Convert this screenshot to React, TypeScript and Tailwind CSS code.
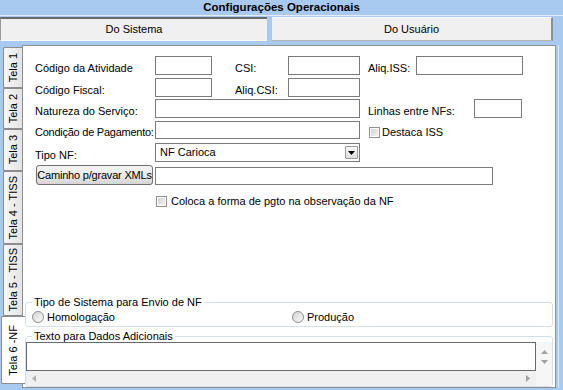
import type { ReactNode } from 'react';

const tabs = [
  { label: 'Tela 1', size: 'h-[41px]' },
  { label: 'Tela 2', size: 'h-[41px]' },
  { label: 'Tela 3', size: 'h-[42px]' },
  { label: 'Tela 4 - TISS', size: 'h-[73px]' },
  { label: 'Tela 5 - TISS', size: 'h-[72px]' },
];

function Label({ children, className = '' }: { children: ReactNode; className?: string }) {
  return <div className={`shrink-0 self-end leading-[13px] whitespace-nowrap ${className}`}>{children}</div>;
}

function Box({ className = '' }: { className?: string }) {
  return <div className={`shrink-0 bg-white border border-[#7b7b7b] ${className}`} />;
}

function CheckBox() {
  return (
    <div className="w-[11px] h-[11px] shrink-0 border border-[#8e8f8f] bg-white p-[1px]">
      <div className="w-full h-full bg-gradient-to-br from-[#d2d2d2] to-[#f4f4f4]" />
    </div>
  );
}

function Radio() {
  return (
    <div className="w-[12px] h-[12px] shrink-0 rounded-full border border-[#8e8f8f] bg-gradient-to-br from-[#d4d4d4] to-[#fafafa]" />
  );
}

function VerticalTabs() {
  return (
    <div className="w-[22px] shrink-0 flex flex-col pt-[2px]">
      {tabs.map((t) => (
        <div
          key={t.label}
          className={`${t.size} ml-[3px] w-[19px] flex items-center justify-center bg-gradient-to-r from-[#f7f7f7] to-[#e4e4e4] border border-r-0 border-[#8c8c8c] rounded-l-[2px]`}
        >
          <span className="[writing-mode:vertical-rl] rotate-180 whitespace-nowrap leading-none">{t.label}</span>
        </div>
      ))}
      <div className="h-[68px] ml-[1px] w-[24px] -mr-[3px] relative z-10 flex items-center justify-center bg-white border border-r-0 border-[#8c8c8c] rounded-l-[2px]">
        <span className="[writing-mode:vertical-rl] rotate-180 whitespace-nowrap leading-none">Tela 6 -NF</span>
      </div>
    </div>
  );
}

function Panel() {
  return (
    <div className="w-[534px] h-[343px] shrink-0 bg-white border border-[#8e8f8f] flex flex-col">
      <div className="pl-[12px] flex flex-col">
        <div className="flex h-[19px] mt-[10px]">
          <Label className="w-[120px]">Código da Atividade</Label>
          <Box className="w-[57px]" />
          <Label className="w-[53px] ml-[23px]">CSI:</Label>
          <Box className="w-[72px]" />
          <Label className="w-[48px] ml-[8px]">Aliq.ISS:</Label>
          <Box className="w-[107px]" />
        </div>
        <div className="flex h-[19px] mt-[3px]">
          <Label className="w-[120px]">Código Fiscal:</Label>
          <Box className="w-[57px]" />
          <Label className="w-[53px] ml-[23px]">Aliq.CSI:</Label>
          <Box className="w-[72px]" />
        </div>
        <div className="flex h-[19px] mt-[2px]">
          <Label className="w-[120px]">Natureza do Serviço:</Label>
          <Box className="w-[205px]" />
          <Label className="w-[106px] ml-[8px]">Linhas entre NFs:</Label>
          <Box className="w-[48px]" />
        </div>
        <div className="flex h-[18px] mt-[3px]">
          <Label className="w-[120px] tracking-[-0.25px]">Condição de Pagamento:</Label>
          <Box className="w-[205px]" />
          <div className="ml-[9px] self-end flex items-center gap-[2px] leading-[13px]">
            <CheckBox />
            <span>Destaca ISS</span>
          </div>
        </div>
        <div className="flex h-[19px] mt-[4px]">
          <Label className="w-[120px]">Tipo NF:</Label>
          <div className="w-[205px] shrink-0 bg-white border border-[#7b7b7b] flex items-center justify-between pl-[4px] pr-[1px]">
            <span className="leading-none">NF Carioca</span>
            <div className="w-[13px] h-[13px] border border-[#9a9a9a] rounded-[1px] bg-gradient-to-b from-[#fafafa] to-[#dedede] flex items-center justify-center">
              <svg width="7" height="4" viewBox="0 0 7 4">
                <path d="M0 0 H7 L3.5 4 Z" fill="#000" />
              </svg>
            </div>
          </div>
        </div>
        <div className="flex h-[20px] mt-[3px]">
          <div className="ml-[1px] w-[117px] h-[20px] shrink-0 rounded-[3px] border border-[#707070] bg-gradient-to-b from-[#f4f4f4] via-[#ebebeb] to-[#d5d5d5] flex items-center justify-center whitespace-nowrap tracking-[-0.2px]">
            Caminho p/gravar XMLs
          </div>
          <Box className="w-[338px] h-[18px] ml-[2px] self-end" />
        </div>
        <div className="flex items-center h-[11px] mt-[11px] ml-[121px] gap-[4px]">
          <CheckBox />
          <span className="leading-none whitespace-nowrap">Coloca a forma de pgto na observação da NF</span>
        </div>
      </div>

      <fieldset className="mt-auto mx-[2px] h-[31px] border border-[#d5dfe5] rounded-[3px]">
        <legend className="ml-[6px] px-[2px] leading-[13px] mt-[1px]">Tipo de Sistema para Envio de NF</legend>
        <div className="flex items-center h-[12px] mt-[2px] ml-[6px]">
          <div className="w-[260px] flex items-center gap-[3px]">
            <Radio />
            <span className="leading-none">Homologação</span>
          </div>
          <div className="flex items-center gap-[3px]">
            <Radio />
            <span className="leading-none">Produção</span>
          </div>
        </div>
      </fieldset>

      <fieldset className="mt-[3px] mx-[2px] h-[57px] border border-[#d5dfe5] rounded-[3px]">
        <legend className="ml-[6px] px-[2px] leading-[12px]">Texto para Dados Adicionais</legend>
        <div className="flex h-[29px]">
          <div className="w-[510px] h-full border border-[#6b6b6b] bg-white" />
          <div className="flex-1 bg-[#f6f6f6] flex flex-col items-center justify-center gap-[6px]">
            <svg width="7" height="4" viewBox="0 0 7 4">
              <path d="M0 4 H7 L3.5 0 Z" fill="#a0a0a0" />
            </svg>
            <svg width="7" height="4" viewBox="0 0 7 4">
              <path d="M0 0 H7 L3.5 4 Z" fill="#a0a0a0" />
            </svg>
          </div>
        </div>
        <div className="flex h-[15px]">
          <div className="w-[510px] h-full bg-[#f0f0f0] flex items-center justify-between px-[6px]">
            <svg width="4" height="7" viewBox="0 0 4 7">
              <path d="M4 0 V7 L0 3.5 Z" fill="#b0b0b0" />
            </svg>
            <svg width="4" height="7" viewBox="0 0 4 7">
              <path d="M0 0 V7 L4 3.5 Z" fill="#a0a0a0" />
            </svg>
          </div>
          <div className="flex-1 bg-[#f6f6f6]" />
        </div>
      </fieldset>
    </div>
  );
}

export default function App() {
  return (
    <div className="w-[563px] h-[390px] overflow-hidden bg-[#a9caf0] font-['Liberation_Sans',Arial,sans-serif] text-[11px] text-black flex flex-col">
      <div className="h-[16px] shrink-0 border-b border-[#e4eefa] flex items-center justify-center font-bold text-[11.5px] leading-none">
        Configurações Operacionais
      </div>
      <div className="h-[24px] shrink-0 mt-[1px] flex gap-[5px] pr-[10px]">
        <div className="w-[267px] bg-[#f0f0f0] border-t-2 border-l border-b border-t-[#6b6b6b] border-l-[#9a9a9a] border-b-[#fafafa] flex items-center justify-center">
          Do Sistema
        </div>
        <div className="flex-1 bg-[#f0f0f0] border-r-2 border-b border-t border-t-[#fafafa] border-r-[#8f8f8f] border-b-[#b5b5b5] flex items-center justify-center">
          Do Usuário
        </div>
      </div>
      <div className="flex-1 flex mt-[4px] min-h-0">
        <VerticalTabs />
        <Panel />
        <div className="ml-[2px] w-[1px] h-[343px] bg-[#e2ecf8]" />
      </div>
    </div>
  );
}
